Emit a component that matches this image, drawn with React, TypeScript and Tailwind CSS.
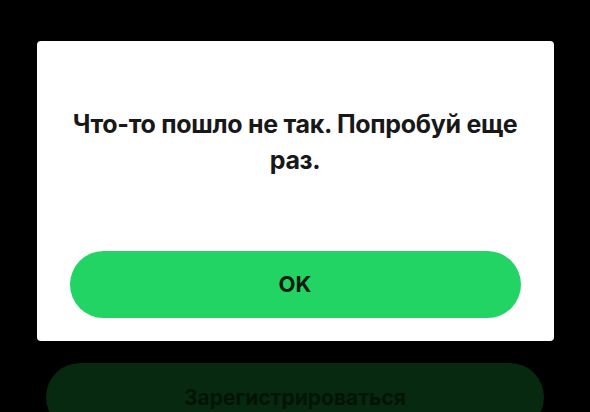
import React from "react";

export default function App() {
  return (
    <div
      className="w-[590px] h-[412px] overflow-hidden bg-black flex flex-col items-center pt-[41px]"
      style={{ fontFamily: "Inter, 'Noto Sans', sans-serif" }}
    >
      <div className="w-[517px] h-[300px] shrink-0 bg-white rounded-[4px] flex flex-col items-center px-[33px] pt-[65px]">
        <p className="text-[25px] leading-[36px] font-bold text-[#181818] text-center tracking-[-0.3px]">
          Что-то пошло не так. Попробуй еще раз.
        </p>
        <button className="mt-auto mb-[23px] w-full h-[67px] rounded-full bg-[#22d463] text-[#0c1a10] text-[22px] font-bold">
          OK
        </button>
      </div>
      <button className="mt-[22px] w-[498px] h-[68px] shrink-0 rounded-full bg-[#06290f] text-[#031407] text-[21px] leading-none font-bold">
        Зарегистрироваться
      </button>
    </div>
  );
}
